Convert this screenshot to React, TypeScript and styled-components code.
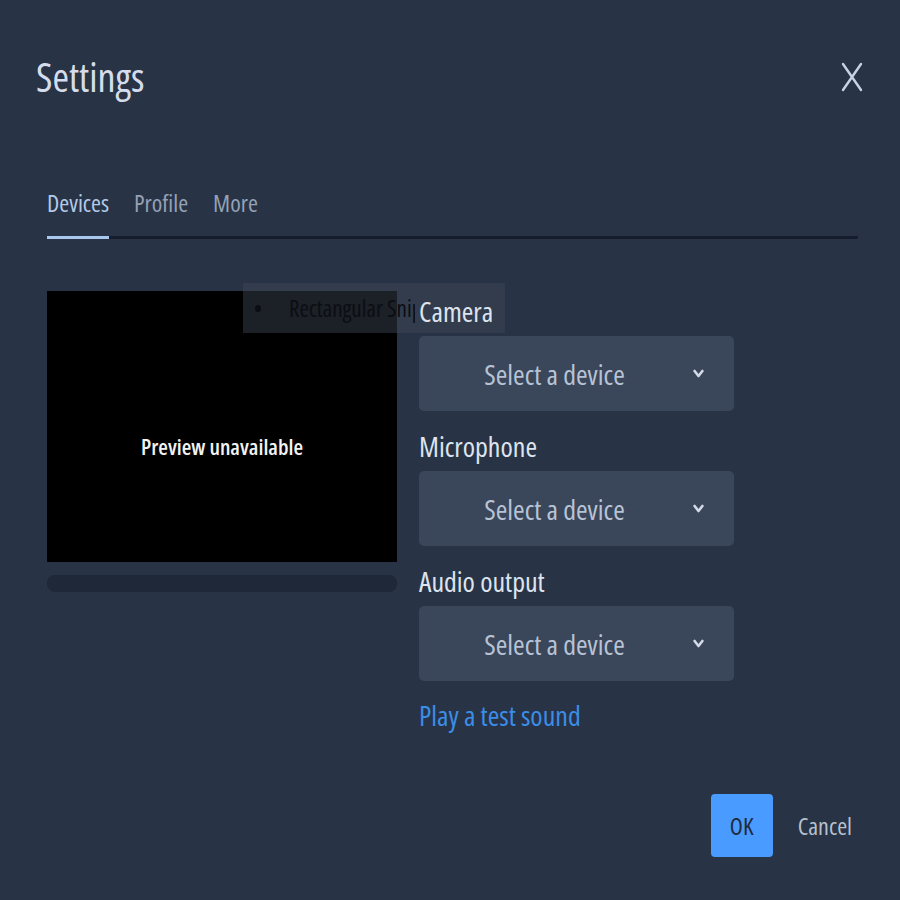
import React from "react";
import styled, { createGlobalStyle } from "styled-components";

const GlobalStyle = createGlobalStyle`
  html, body {
    margin: 0;
    background: #283346;
  }
  body {
    font-family: "Open Sans", "Liberation Sans", sans-serif;
    font-stretch: condensed;
  }
`;

const Dialog = styled.div`
  width: 900px;
  height: 900px;
  box-sizing: border-box;
  padding: 0 42px 0 47px;
  color: #dde4ee;
`;

const Header = styled.div`
  display: flex;
  align-items: center;
  justify-content: space-between;
  padding-top: 52px;
  height: 50px;
`;

const Title = styled.h1`
  margin: 0 0 0 -11px;
  font-size: 40px;
  font-weight: 400;
  line-height: 50px;
  color: #d5ddec;
`;

const CloseButton = styled.button`
  display: flex;
  align-items: center;
  justify-content: center;
  margin-right: -5px;
  padding: 0;
  border: none;
  background: none;
  color: #c8d2e4;
  cursor: pointer;
`;

const TabList = styled.div`
  display: flex;
  gap: 25px;
  margin-top: 84px;
  border-bottom: 3px solid #151d2c;
  border-radius: 2px;
`;

const Tab = styled.div<{ $active?: boolean }>`
  font-size: 24px;
  line-height: 34px;
  padding-bottom: 16px;
  margin-bottom: -3px;
  color: ${(p) => (p.$active ? "#b3c9e8" : "#95a1b4")};
  border-bottom: 3px solid ${(p) => (p.$active ? "#a9c7ee" : "transparent")};
  cursor: pointer;
`;

const Body = styled.div`
  position: relative;
  display: grid;
  grid-template-columns: 350px 315px;
  column-gap: 22px;
  margin-top: 52px;
`;

const PreviewColumn = styled.div`
  display: flex;
  flex-direction: column;
  gap: 13px;
`;

const Preview = styled.div`
  height: 271px;
  background: #000;
  display: flex;
  align-items: center;
  justify-content: center;
  padding-top: 38px;
  box-sizing: border-box;
  color: #f2f2f2;
  font-size: 22px;
  font-weight: 600;
`;

const LevelBar = styled.div`
  height: 17px;
  border-radius: 8px;
  background: #1f2838;
`;

const SnipHint = styled.div`
  position: absolute;
  left: 196px;
  top: -8px;
  width: 262px;
  height: 50px;
  z-index: 1;
  display: flex;
  align-items: center;
  background: rgba(62, 71, 87, 0.45);
  color: #0b0e13;
  font-size: 23px;
`;

const SnipDot = styled.span`
  width: 6px;
  height: 7px;
  margin: 0 28px 0 12px;
  border-radius: 50%;
  background: #0b0e13;
`;

const SnipText = styled.span`
  width: 126px;
  overflow: hidden;
  white-space: nowrap;
`;

const DeviceColumn = styled.div`
  position: relative;
  z-index: 2;
  display: flex;
  flex-direction: column;
`;

const FieldLabel = styled.div<{ $first?: boolean }>`
  font-size: 28px;
  line-height: 30px;
  margin: ${(p) => (p.$first ? "5px" : "20px")} 0 10px;
  color: #dde4ee;
`;

const Select = styled.div`
  display: flex;
  align-items: center;
  height: 75px;
  padding-right: 30px;
  border-radius: 5px;
  background: #3a4659;
  cursor: pointer;
`;

const SelectValue = styled.span`
  flex: 1;
  text-align: center;
  font-size: 28px;
  color: #b7c3d5;
`;

const Chevron = styled.svg`
  margin-left: 3px;
  color: #d2dae7;
`;

const TestSound = styled.a`
  margin-top: 19px;
  font-size: 28px;
  line-height: 30px;
  color: #3b8de6;
  cursor: pointer;
`;

const Footer = styled.div`
  display: flex;
  justify-content: flex-end;
  align-items: center;
  gap: 19px;
  margin-top: 64px;
`;

const OkButton = styled.button`
  width: 62px;
  height: 63px;
  border: none;
  border-radius: 4px;
  background: #4a9bff;
  color: #1f2a3b;
  font-family: inherit;
  font-stretch: condensed;
  font-size: 24px;
  cursor: pointer;
`;

const CancelButton = styled.button`
  padding: 0 6px;
  border: none;
  background: none;
  color: #b8c0cc;
  font-family: inherit;
  font-stretch: condensed;
  font-size: 24px;
  cursor: pointer;
`;

const DeviceSelect = ({ label, first }: { label: string; first?: boolean }) => (
  <>
    <FieldLabel $first={first}>{label}</FieldLabel>
    <Select>
      <SelectValue>Select a device</SelectValue>
      <Chevron width="11" height="9" viewBox="0 0 11 9">
        <path d="M1.6 2 L5.5 7 L9.4 2" fill="none" stroke="currentColor" strokeWidth="2.6" strokeLinecap="round" strokeLinejoin="round" />
      </Chevron>
    </Select>
  </>
);

const App = () => {
  return (
    <>
      <GlobalStyle />
      <Dialog>
        <Header>
          <Title>Settings</Title>
          <CloseButton aria-label="Close">
            <svg width="22" height="30" viewBox="0 0 22 30">
              <path d="M2 2 L20 28 M20 2 L2 28" stroke="currentColor" strokeWidth="2.4" strokeLinecap="round" />
            </svg>
          </CloseButton>
        </Header>

        <TabList>
          <Tab $active>Devices</Tab>
          <Tab>Profile</Tab>
          <Tab>More</Tab>
        </TabList>

        <Body>
          <PreviewColumn>
            <Preview>Preview unavailable</Preview>
            <LevelBar />
          </PreviewColumn>

          <SnipHint>
            <SnipDot />
            <SnipText>Rectangular Snip</SnipText>
          </SnipHint>

          <DeviceColumn>
            <DeviceSelect label="Camera" first />
            <DeviceSelect label="Microphone" />
            <DeviceSelect label="Audio output" />
            <TestSound>Play a test sound</TestSound>
          </DeviceColumn>
        </Body>

        <Footer>
          <OkButton>OK</OkButton>
          <CancelButton>Cancel</CancelButton>
        </Footer>
      </Dialog>
    </>
  );
};

export default App;
